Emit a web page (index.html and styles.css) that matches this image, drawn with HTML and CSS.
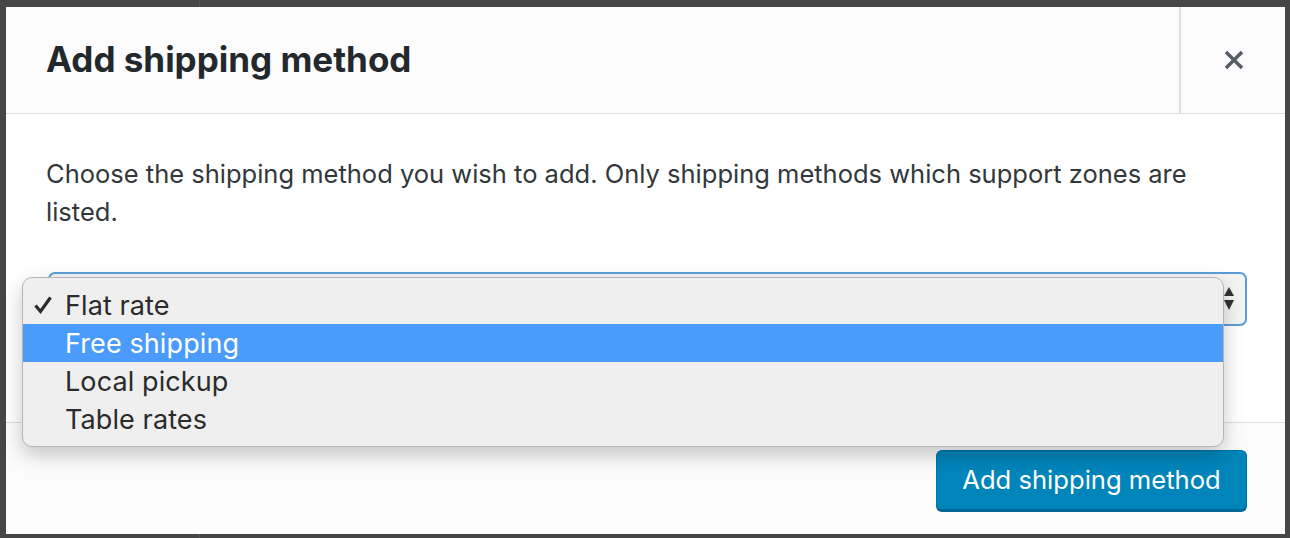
FILE: index.html
```html
<!DOCTYPE html>
<html>
<head>
<meta charset="utf-8">
<link rel="stylesheet" href="styles.css">
</head>
<body>
<div class="backdrop-line"></div>
<div class="modal">
  <header class="modal-header">
    <h1 class="modal-title">Add shipping method</h1>
    <button class="modal-close" aria-label="Close">
      <svg width="22" height="22" viewBox="0 0 22 22"><path d="M3 3 L19 19 M19 3 L3 19" stroke="#555d66" stroke-width="3.4" stroke-linecap="butt"/></svg>
    </button>
  </header>
  <section class="modal-body">
    <p class="intro">Choose the shipping method you wish to add. Only shipping methods which support zones are listed.</p>
    <div class="select">
      <span class="select-arrows">
        <svg width="12" height="26" viewBox="0 0 12 26"><path d="M6 1 L11 10 L1 10 Z" fill="#333"/><path d="M1 14 L11 14 L6 24 Z" fill="#333"/></svg>
      </span>
    </div>
  </section>
  <footer class="modal-footer">
    <button class="primary-btn">Add shipping method</button>
  </footer>
  <ul class="dropdown">
    <li class="option"><span class="check"><svg width="20" height="20" viewBox="0 0 20 20"><path d="M2.5 10.5 L7.5 16.5 L17.5 2.5" fill="none" stroke="#2b2b2b" stroke-width="3.2" stroke-linejoin="miter" stroke-linecap="butt"/></svg></span>Flat rate</li>
    <li class="option selected"><span class="check"></span>Free shipping</li>
    <li class="option"><span class="check"></span>Local pickup</li>
    <li class="option"><span class="check"></span>Table rates</li>
  </ul>
</div>
</body>
</html>
```

FILE: styles.css
```css
html, body {
  margin: 0;
  padding: 0;
}
body {
  background: #464646;
  width: 1290px;
  height: 538px;
  overflow: hidden;
  position: relative;
  font-family: Inter, "Liberation Sans", sans-serif;
}
.backdrop-line {
  position: absolute;
  left: 199px;
  top: 0;
  width: 1px;
  height: 538px;
  background: #555;
}
.modal {
  position: relative;
  margin: 7px 5px 0 6px;
  width: 1279px;
  height: 527px;
  background: #fff;
  display: flex;
  flex-direction: column;
}
.modal-header {
  height: 106px;
  background: #fcfcfc;
  border-bottom: 1px solid #dddddd;
  display: flex;
  align-items: center;
  flex: none;
}
.modal-title {
  flex: 1;
  margin: 0;
  padding: 0 0 2px 40px;
  font-size: 35px;
  font-weight: 700;
  color: #23282d;
  letter-spacing: 0;
}
.modal-close {
  width: 106px;
  height: 106px;
  border: none;
  border-left: 2px solid #dddddd;
  background: transparent;
  display: flex;
  align-items: center;
  justify-content: center;
  padding: 0 0 0 2px;
}
.modal-body {
  flex: 1;
  padding: 41px 38px 0 40px;
}
.intro {
  margin: 0;
  font-size: 25.5px;
  line-height: 38px;
  color: #32373c;
}
.select {
  margin: 41px 0 0 2px;
  height: 50px;
  border: 2px solid #5b9dd9;
  border-radius: 7px;
  background: #f4f4f4;
  display: flex;
  justify-content: flex-end;
  align-items: center;
  padding-right: 10px;
}
.select-arrows {
  display: flex;
}
.modal-footer {
  height: 112px;
  flex: none;
  background: #fcfcfc;
  border-top: 1px solid #dddddd;
  display: flex;
  justify-content: flex-end;
  align-items: flex-start;
  padding: 27px 38px 0 0;
  box-sizing: border-box;
}
.primary-btn {
  width: 311px;
  height: 62px;
  background: #0085ba;
  border: 1px solid #0073aa;
  border-bottom: 3px solid #006799;
  border-radius: 6px;
  color: #fff;
  font-family: Inter, "Liberation Sans", sans-serif;
  font-size: 25.6px;
  padding: 0 0 2px 0;
}
.dropdown {
  position: absolute;
  left: 16px;
  top: 270px;
  width: 1202px;
  margin: 0;
  padding: 8px 0 8px 0;
  box-sizing: border-box;
  list-style: none;
  background: #efefef;
  border: 1px solid #b5b5b5;
  border-radius: 10px;
  box-shadow: 0 8px 20px rgba(0,0,0,0.22);
}
.option {
  height: 38px;
  display: flex;
  align-items: center;
  font-size: 27px;
  color: #2b2b2b;
  letter-spacing: 0.1px;
}
.option.selected {
  background: #4a9bfb;
  color: #fff;
}
.check {
  width: 42px;
  padding-left: 10px;
  box-sizing: border-box;
  display: flex;
  align-items: center;
}
```
